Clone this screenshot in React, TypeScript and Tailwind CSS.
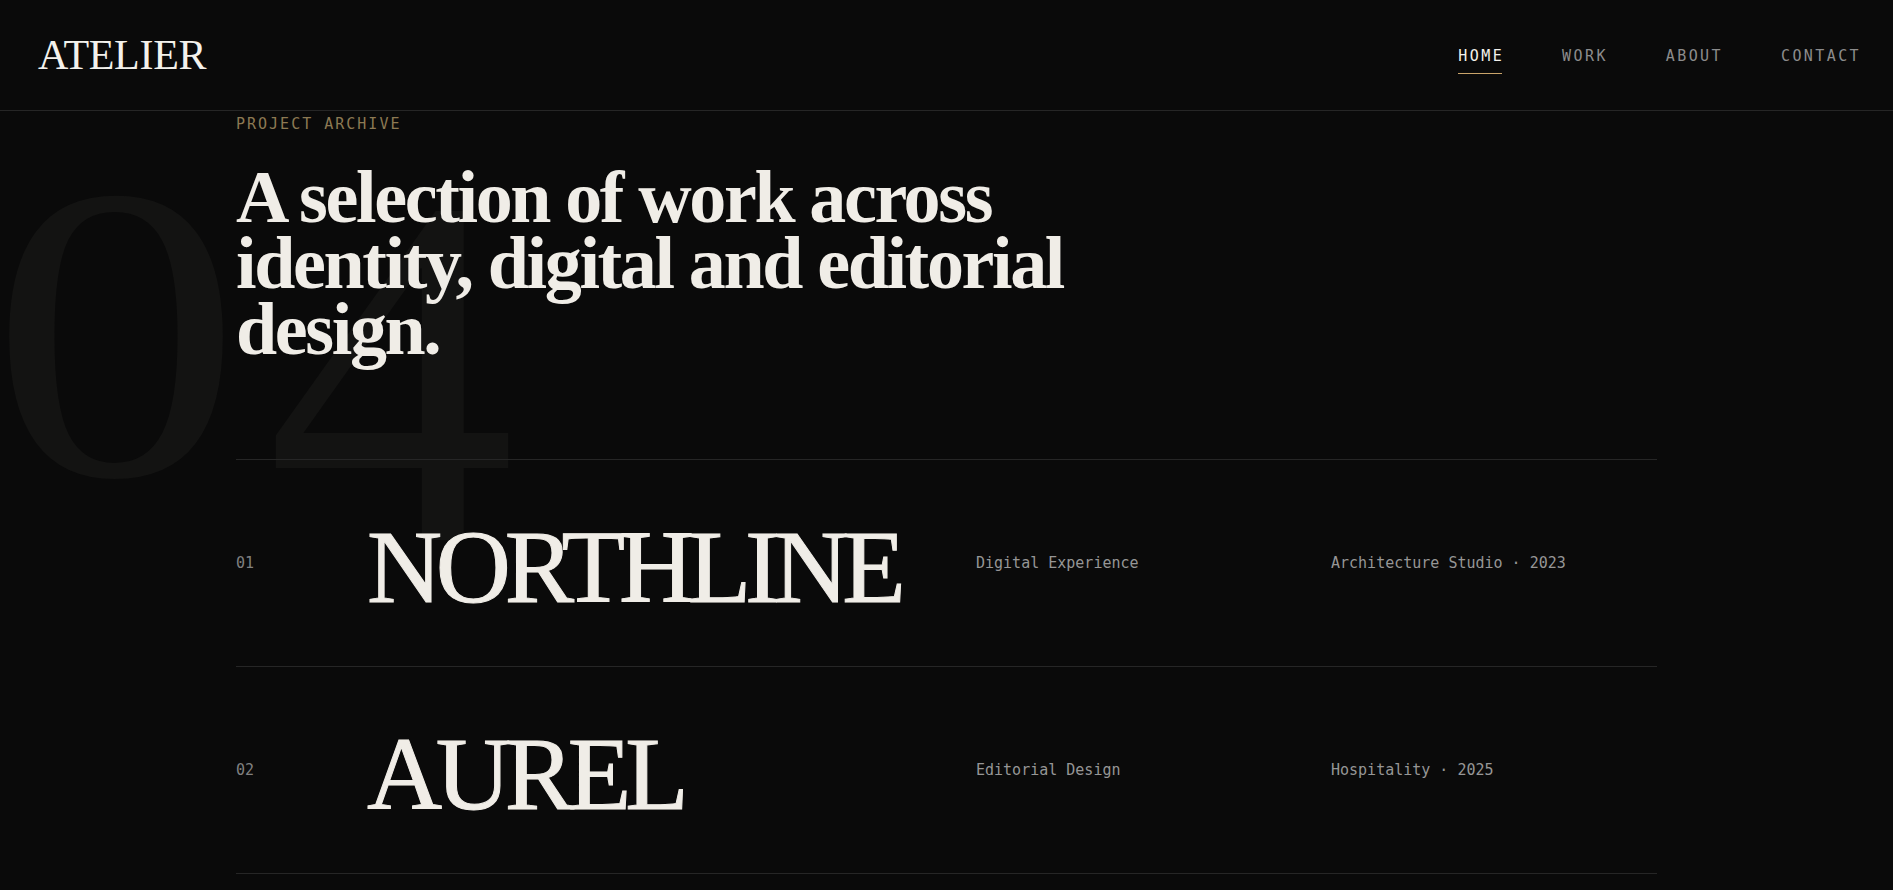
const projects = [
  { no: '01', name: 'NORTHLINE', discipline: 'Digital Experience', client: 'Architecture Studio · 2023' },
  { no: '02', name: 'AUREL', discipline: 'Editorial Design', client: 'Hospitality · 2025' },
];

const navItems = ['HOME', 'WORK', 'ABOUT', 'CONTACT'];

const serif = "font-['Liberation_Serif','Times_New_Roman',serif]";
const mono = "font-['DejaVu_Sans_Mono','Liberation_Mono',monospace]";

const Header = () => {
  return (
    <header className="relative z-10 flex h-[111px] items-center justify-between border-b border-[#262626] pl-[38px] pr-8">
      <a href="#" className={`${serif} text-[42px] leading-none tracking-[-0.3px] text-[#f3f1ec]`}>
        ATELIER
      </a>
      <nav className="flex items-center gap-[58px]">
        {navItems.map((item, i) => (
          <a
            key={item}
            href="#"
            className={`${mono} relative mt-[2px] text-[15px] leading-5 tracking-[2.4px] ${
              i === 0 ? 'text-[#f3f1ec]' : 'text-[#8c8c8c]'
            }`}
          >
            {item}
            {i === 0 && <span className="absolute -bottom-[8px] left-0 right-[2px] h-px bg-[#c9a46a]" />}
          </a>
        ))}
      </nav>
    </header>
  );
};

const ProjectRow = ({ no, name, discipline, client }: (typeof projects)[number]) => {
  return (
    <li className="grid grid-cols-[131px_609px_355px_1fr] items-center border-t border-[#262626] py-[51px] last:border-b">
      <span className={`${mono} text-[15px] text-[#808080]`}>{no}</span>
      <h2
        className={`${serif} translate-y-[4px] text-[104px] leading-none tracking-[-0.06em] text-[#f0ede7] [-webkit-text-stroke:1px_#f0ede7]`}
      >
        {name}
      </h2>
      <span className={`${mono} text-[15px] text-[#969696]`}>{discipline}</span>
      <span className={`${mono} text-[15px] text-[#969696]`}>{client}</span>
    </li>
  );
};

export default function App() {
  return (
    <div className="relative min-h-screen overflow-hidden bg-[#0a0a0a]">
      {/* oversized archive count, sits behind everything */}
      <div
        aria-hidden
        className={`${serif} pointer-events-none absolute left-[-10px] top-[124px] flex select-none items-start leading-none text-[#131312]`}
      >
        <span className="inline-block origin-left scale-x-[1.2] text-[420px]">0</span>
        <span className="-mt-[3px] ml-[66px] text-[500px]">4</span>
      </div>

      <Header />

      <main className="relative mx-auto max-w-[1421px]">
        <p className={`${mono} mt-[3px] text-[15px] leading-5 tracking-[2px] text-[#8c7953]`}>PROJECT ARCHIVE</p>
        <h1
          className={`${serif} mt-[30px] max-w-[880px] text-[74px] font-bold leading-[66px] tracking-[-0.032em] text-[#f0ede7]`}
        >
          A selection of work across identity, digital and editorial design.
        </h1>

        <ul className="mt-[97px]">
          {projects.map((p) => (
            <ProjectRow key={p.no} {...p} />
          ))}
        </ul>
      </main>
    </div>
  );
}
